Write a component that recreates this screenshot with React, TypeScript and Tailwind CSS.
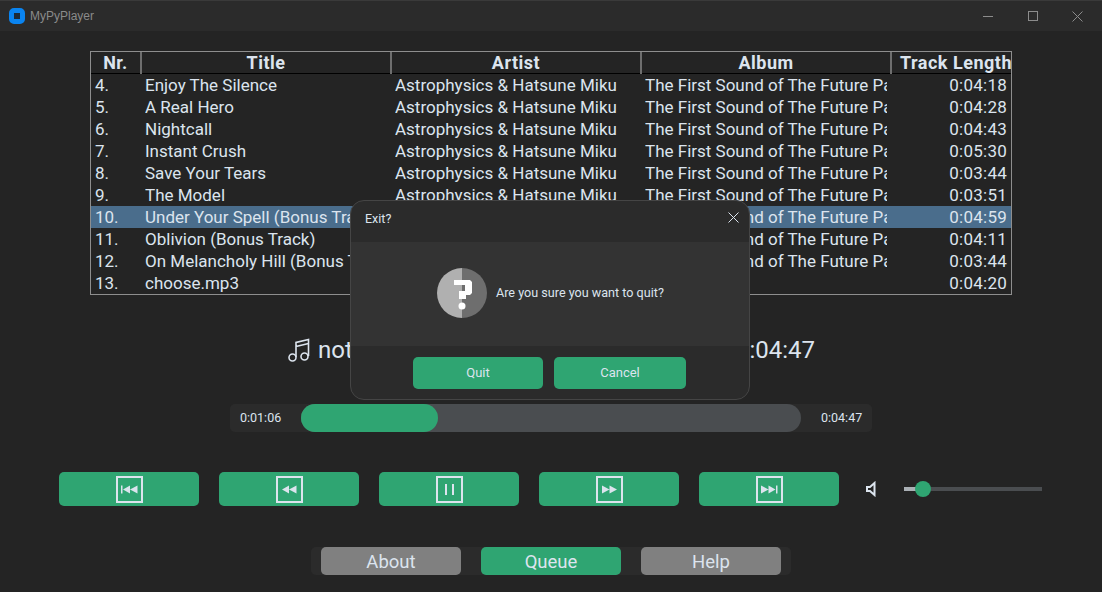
const rows = [
  ["4.", "Enjoy The Silence", "Astrophysics & Hatsune Miku", "The First Sound of The Future Part 2", "0:04:18"],
  ["5.", "A Real Hero", "Astrophysics & Hatsune Miku", "The First Sound of The Future Part 2", "0:04:28"],
  ["6.", "Nightcall", "Astrophysics & Hatsune Miku", "The First Sound of The Future Part 2", "0:04:43"],
  ["7.", "Instant Crush", "Astrophysics & Hatsune Miku", "The First Sound of The Future Part 2", "0:05:30"],
  ["8.", "Save Your Tears", "Astrophysics & Hatsune Miku", "The First Sound of The Future Part 2", "0:03:44"],
  ["9.", "The Model", "Astrophysics & Hatsune Miku", "The First Sound of The Future Part 2", "0:03:51"],
  ["10.", "Under Your Spell (Bonus Track)", "Astrophysics & Hatsune Miku", "The First Sound of The Future Part 2", "0:04:59"],
  ["11.", "Oblivion (Bonus Track)", "Astrophysics & Hatsune Miku", "The First Sound of The Future Part 2", "0:04:11"],
  ["12.", "On Melancholy Hill (Bonus Track)", "Astrophysics & Hatsune Miku", "The First Sound of The Future Part 2", "0:03:44"],
  ["13.", "choose.mp3", "", "", "0:04:20"],
];

const headers = [
  { name: "Nr.", width: "w-[50px]" },
  { name: "Title", width: "w-[250px]" },
  { name: "Artist", width: "w-[250px]" },
  { name: "Album", width: "w-[250px]" },
  { name: "Track Length", width: "w-[120px]" },
];

function MediaIcon({ d }: { d: string }) {
  return (
    <svg width="27" height="27" viewBox="0 0 27 27" className="text-[#dce4ee]">
      <rect x="1" y="1" width="25" height="25" fill="none" stroke="currentColor" strokeWidth="2" />
      <path d={d} fill="currentColor" />
    </svg>
  );
}

const controls = [
  "M5 9.500h1.500v8H5zM7 13.500l7-4v8zM14 13.500l7.500-4v8z",
  "M6 13.500l7-4v8zM13 13.500l7.500-4v8z",
  "M9 8h2v11H9zM16 8h2v11h-2z",
  "M6 9.500l7.500 4-7.500 4zM13.500 9.500l7.500 4-7.500 4z",
  "M5 9.500l7.500 4-7.500 4zM12.500 9.500l7 4-7 4zM20 9.500h1.500v8H20z",
];

export default function App() {
  return (
    <div className="relative h-[592px] w-[1102px] overflow-hidden bg-[#242424] font-['Roboto',sans-serif] text-[#dce4ee]">
      {/* title bar */}
      <div className="flex h-[31px] items-center border-t border-[#3a3a3a] bg-[#2b2b2b] pl-[9px]">
        <div className="h-[16px] w-[16px] rounded-[5px] border-[5px] border-[#0a84f0] bg-[#1c2a38]" />
        <span className="ml-[5px] font-['Liberation_Sans',sans-serif] text-[12px] text-[#8a8a8a]">MyPyPlayer</span>
        <div className="ml-auto mr-[2px] flex items-center text-[#8c8c8c]">
          <div className="flex w-[45px] justify-center"><div className="h-px w-[10px] bg-current" /></div>
          <div className="flex w-[45px] justify-center"><div className="h-[10px] w-[10px] border border-current" /></div>
          <div className="flex w-[45px] justify-center">
            <svg width="11" height="11" viewBox="0 0 11 11" stroke="currentColor"><path d="M.5.5l10 10M10.500.5l-10 10" /></svg>
          </div>
        </div>
      </div>

      {/* track table */}
      <div className="ml-[90px] mt-[20px] w-[922px] border border-[#8e8e8e]">
        <table className="w-[920px] table-fixed border-collapse text-[17px] leading-[22px]">
          <thead>
            <tr className="border-b border-black text-[18px] font-bold leading-[21px] tracking-[0.5px]">
              {headers.map((h, i) => (
                <th key={h.name} className={`${h.width} h-[21px] overflow-hidden whitespace-nowrap p-0 ${i < 4 ? "border-r-2 border-[#6e6e6e] text-center" : "pl-[8px] text-left"}`}>
                  {h.name}
                </th>
              ))}
            </tr>
          </thead>
          <tbody>
            {rows.map((row) => (
              <tr key={row[0]} className={`h-[22px] ${row[0] === "10." ? "bg-[#4a6d8c]" : ""}`}>
                <td className="p-0 pl-[4px]">{row[0]}</td>
                <td className="p-0 pl-[4px]"><div className="w-[242px] overflow-hidden whitespace-nowrap">{row[1]}</div></td>
                <td className="p-0 pl-[4px]"><div className="w-[242px] overflow-hidden whitespace-nowrap">{row[2]}</div></td>
                <td className="p-0 pl-[4px]"><div className="w-[242px] overflow-hidden whitespace-nowrap">{row[3]}</div></td>
                <td className="p-0 pr-[4px] text-right tracking-[0.25px]">{row[4]}</td>
              </tr>
            ))}
          </tbody>
        </table>
      </div>

      {/* now playing */}
      <div className="ml-[288px] mt-[40px] flex h-[30px] w-[527px] items-center justify-between text-[24px]">
        <div className="flex items-center gap-[8px]">
          <svg width="22" height="24" viewBox="0 0 22 24" fill="none" stroke="currentColor" strokeWidth="1.6">
            <circle cx="4.500" cy="19.500" r="3.500" />
            <circle cx="16.500" cy="18.500" r="3.500" />
            <path d="M8 19V4.500L20.500 1.500V18M8 8.500l12.500-3" />
          </svg>
          <span>not</span>
        </div>
        <span>0:04:47</span>
      </div>

      {/* progress */}
      <div className="ml-[230px] mt-[39px] flex h-[28px] w-[642px] items-center rounded-[5px] bg-[#2b2b2b] text-[12.500px]">
        <span className="ml-[10px] w-[61px]">0:01:06</span>
        <div className="h-[28px] w-[500px] rounded-full bg-[#4a4d50]">
          <div className="h-full w-[137px] rounded-full bg-[#2fa572]" />
        </div>
        <span className="ml-[20px]">0:04:47</span>
      </div>

      {/* transport */}
      <div className="ml-[59px] mt-[40px] flex h-[34px] items-center">
        <div className="flex gap-[20px]">
          {controls.map((d) => (
            <button key={d} className="flex h-[34px] w-[140px] items-center justify-center rounded-[5px] bg-[#2fa572]">
              <MediaIcon d={d} />
            </button>
          ))}
        </div>
        <svg width="10" height="16" viewBox="0 0 10 16" className="ml-[27px] text-[#dce4ee]">
          <path d="M1 6h3l4.500-4v12L4 10H1z" fill="none" stroke="currentColor" strokeWidth="2" />
        </svg>
        <div className="relative ml-[28px] h-[4px] w-[138px] bg-[#4a4d50]">
          <div className="h-full w-[19px] bg-[#aab0b5]" />
          <div className="absolute left-[11px] top-[-6px] h-[16px] w-[16px] rounded-full bg-[#2fa572]" />
        </div>
      </div>

      {/* bottom tabs */}
      <div className="ml-[311px] mt-[41px] flex h-[28px] w-[480px] items-center justify-center gap-[20px] rounded-[5px] bg-[#2b2b2b] text-[18.500px]">
        <button className="h-[28px] w-[140px] rounded-[5px] bg-[#808080] pt-[2px] text-[#dce4ee]">About</button>
        <button className="h-[28px] w-[140px] rounded-[5px] bg-[#2fa572] pt-[2px] text-[#dce4ee]">Queue</button>
        <button className="h-[28px] w-[140px] rounded-[5px] bg-[#808080] pt-[2px] text-[#dce4ee]">Help</button>
      </div>

      {/* exit dialog */}
      <div className="absolute left-[350px] top-[200px] flex h-[200px] w-[400px] flex-col overflow-hidden rounded-[14px] border border-[#454545] bg-[#2b2b2b]">
        <div className="flex h-[41px] items-center justify-between pb-[5px] pl-[14px] pr-[10px] text-[12.500px]">
          <span>Exit?</span>
          <svg width="11" height="11" viewBox="0 0 11 11" stroke="currentColor" className="mb-[4px]"><path d="M.5.5l10 10M10.500.5l-10 10" /></svg>
        </div>
        <div className="flex h-[104px] items-center bg-[#333333] pb-[2px] pl-[86px] text-[12.600px]">
          <svg width="50" height="50" viewBox="0 0 50 50">
            <path d="M25 0a25 25 0 0 0 0 50z" fill="#b0b0b0" />
            <path d="M25 0a25 25 0 0 1 0 50z" fill="#6e6e6e" />
            <path d="M17 12h16l2 2v11l-2 2h-4v4h-7v-8h6v-6H17z" fill="#fff" />
            <circle cx="25" cy="38" r="3.500" fill="#fff" />
          </svg>
          <span className="ml-[9px]">Are you sure you want to quit?</span>
        </div>
        <div className="flex flex-1 justify-start gap-[11px] pl-[62px] pt-[11px] text-[13px]">
          <button className="h-[32px] w-[130px] rounded-[5px] bg-[#2fa572] text-[#dce4ee]">Quit</button>
          <button className="h-[32px] w-[132px] rounded-[5px] bg-[#2fa572] text-[#dce4ee]">Cancel</button>
        </div>
      </div>
    </div>
  );
}
